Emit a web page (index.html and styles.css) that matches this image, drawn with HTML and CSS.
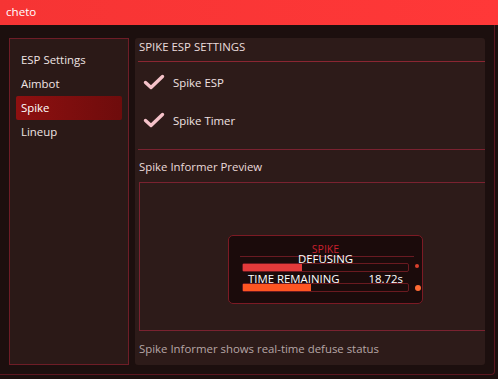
FILE: index.html
```html
<!DOCTYPE html>
<html lang="en">
  <head>
    <meta charset="utf-8">
    <title>cheto</title>
    <link rel="stylesheet" href="styles.css">
  </head>
  <body>
    <header class="titlebar">cheto</header>

    <div class="window">
      <nav class="sidebar">
        <ul class="menu">
          <li><a href="#">ESP Settings</a></li>
          <li><a href="#">Aimbot</a></li>
          <li><a href="#" class="active">Spike</a></li>
          <li><a href="#">Lineup</a></li>
        </ul>
      </nav>

      <main class="panel">
        <h2 class="panel-title">SPIKE ESP SETTINGS</h2>

        <div class="options">
          <label class="option">
            <svg class="check" viewBox="0 0 22 16"><polyline points="2.5,8.5 8,13.5 19.5,2.5" /></svg>
            Spike ESP
          </label>
          <label class="option">
            <svg class="check" viewBox="0 0 22 16"><polyline points="2.5,8.5 8,13.5 19.5,2.5" /></svg>
            Spike Timer
          </label>
        </div>

        <h3 class="section-title">Spike Informer Preview</h3>

        <div class="preview">
          <div class="informer">
            <div class="informer-title">SPIKE</div>
            <div class="informer-line"></div>
            <div class="informer-state">DEFUSING</div>
            <div class="bar-row">
              <div class="bar"><div class="bar-fill red" style="width: 36%"></div></div>
              <span class="dot small"></span>
            </div>
            <div class="time-row">
              <span>TIME REMAINING</span>
              <span>18.72s</span>
            </div>
            <div class="bar-row">
              <div class="bar"><div class="bar-fill orange" style="width: 41%"></div></div>
              <span class="dot"></span>
            </div>
          </div>
        </div>

        <p class="hint">Spike Informer shows real-time defuse status</p>
      </main>
    </div>
  </body>
</html>
```

FILE: styles.css
```css
html, body {
  margin: 0;
  padding: 0;
}

body {
  width: 498px;
  height: 379px;
  overflow: hidden;
  background: #1c0f0e;
  font-family: "Open Sans", "Noto Sans", sans-serif;
  font-size: 11.4px;
  color: #eadcdc;
}

.titlebar {
  height: 25px;
  line-height: 24px;
  padding-left: 6px;
  background: linear-gradient(90deg, #f63434, #ff3838);
  color: #fff;
  font-size: 11.6px;
}

.window {
  display: flex;
  gap: 6px;
  width: 476px;
  height: 336px;
  padding: 13px 9px 0 9px;
  border-right: 1px solid #5c1620;
  border-bottom: 1px solid #5c1620;
  border-bottom-right-radius: 4px;
}

/* left navigation */
.sidebar {
  width: 118px;
  height: 325px;
  background: #2b1917;
  border: 1px solid #6e1d27;
}

.menu {
  list-style: none;
  margin: 0;
  padding: 9px 6px 0 6px;
}

.menu a {
  display: block;
  height: 24px;
  line-height: 24px;
  padding-left: 5px;
  color: #f0e4e4;
  text-decoration: none;
  border-radius: 2px;
}

.menu a.active {
  background: linear-gradient(90deg, #8e1010, #6e0c0c);
  color: #fff;
}

/* right panel */
.panel {
  flex: 1;
  height: 327px;
  background: #2d1b19;
  border-radius: 3px;
  padding-left: 3px;
  display: flex;
  flex-direction: column;
}

.panel-title {
  margin: 0;
  height: 23px;
  line-height: 18px;
  font-size: 11.4px;
  font-weight: normal;
  padding-left: 1px;
  border-bottom: 1px solid #8a2632;
}

.options {
  display: flex;
  flex-direction: column;
  gap: 16px;
  padding: 9px 0 0 5px;
  height: 78px;
  border-bottom: 1px solid #7a2230;
}

.option {
  display: flex;
  align-items: center;
  gap: 8px;
  height: 22px;
  color: #f0e2e2;
}

.check {
  width: 22px;
  height: 16px;
  fill: none;
  stroke: #f5c2c9;
  stroke-width: 3.4;
  stroke-linecap: round;
  stroke-linejoin: round;
}

.section-title {
  margin: 0;
  height: 32px;
  line-height: 34px;
  font-size: 11.4px;
  font-weight: normal;
  padding-left: 1px;
  color: #eadada;
}

.preview {
  flex: none;
  height: 147px;
  border-top: 1px solid #7a2230;
  border-left: 1px solid #7a2230;
  border-bottom: 1px solid #7a2230;
  margin-left: 1px;
}

/* spike informer widget */
.informer {
  width: 193px;
  margin: 52px 0 0 88px;
  padding: 6px 0 11px 0;
  background: #1b0b0b;
  border: 1px solid #7c1a24;
  border-radius: 5px;
}

.informer-title {
  text-align: center;
  line-height: 14px;
  font-size: 10.5px;
  color: #c8202e;
}

.informer-line {
  height: 1px;
  margin: 0 8px 0 11px;
  background: #6a1a22;
}

.informer-state {
  position: relative;
  margin-top: -5px;
  text-align: center;
  line-height: 14px;
  font-size: 11.4px;
  color: #fff;
}

.bar-row {
  display: flex;
  align-items: center;
  gap: 6px;
  height: 9px;
  margin-top: -3px;
  padding-left: 13px;
}

.bar {
  width: 165px;
  height: 7px;
  border: 1px solid #6a1a20;
  border-radius: 2px;
}

.bar-fill {
  height: 100%;
}

.bar-fill.red {
  background: #e23a3a;
}

.bar-fill.orange {
  background: #ff5522;
}

.dot {
  width: 6px;
  height: 6px;
  border-radius: 50%;
  background: #ff6a34;
}

.dot.small {
  width: 4px;
  height: 4px;
  margin-top: -4px;
  background: #d8402e;
}

.time-row {
  position: relative;
  display: flex;
  justify-content: space-between;
  padding: 0 19px 0 19px;
  line-height: 14px;
  font-size: 11.4px;
  color: #fff;
}

.hint {
  margin: 0;
  padding: 10px 0 0 1px;
  color: #b6a6a6;
}
```
